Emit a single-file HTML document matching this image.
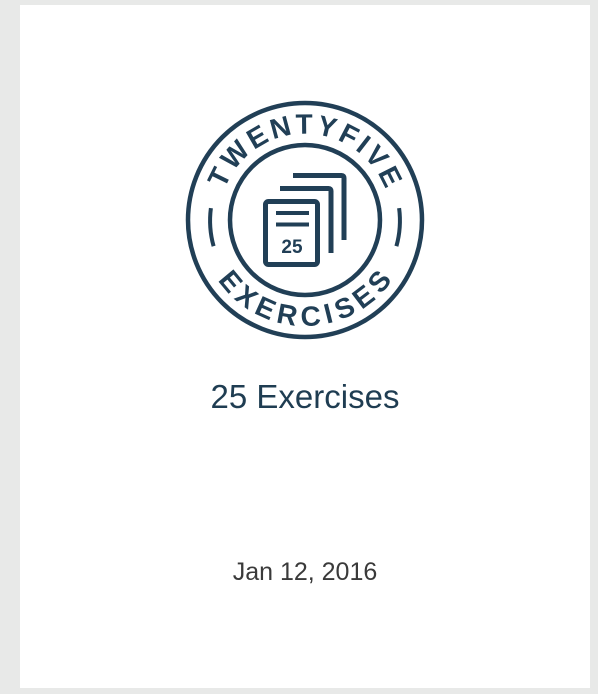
<!DOCTYPE html>
<html><head><style>
html,body{margin:0;padding:0;}
body{width:598px;height:694px;background:#e8e9e8;position:relative;overflow:hidden;font-family:"Liberation Sans",sans-serif;}
.card{position:absolute;left:20px;top:5px;width:570px;height:683px;background:#fff;}
.t{position:absolute;left:20px;width:570px;text-align:center;}
</style></head><body>
<div class="card"></div>
<svg width="598" height="694" style="position:absolute;left:0;top:0">
<g fill="none" stroke="#213f56">
<circle cx="305" cy="220" r="117" stroke-width="4.5"/>
<circle cx="305" cy="220" r="75" stroke-width="4.5"/>
<path d="M210.9 208.1 A95 95 0 0 0 213.6 246.2" stroke-width="4"/>
<path d="M399.1 208.1 A95 95 0 0 1 396.4 246.2" stroke-width="4"/>
<rect x="265.5" y="201.5" width="52" height="63" rx="3" stroke-width="5"/>
<path d="M280 188.5 H328.5 Q331 188.5 331 191 V253" stroke-width="5"/>
<path d="M293 175.5 H341.5 Q344 175.5 344 178 V240" stroke-width="5"/>
<path d="M276 213 H309 M276 224.5 H309" stroke-width="4"/>
</g>
<text x="292" y="253" text-anchor="middle" font-family="Liberation Sans" font-weight="bold" font-size="19" fill="#213f56">25</text>
<defs>
<path id="top" d="M224.6 189.2 A86 86 0 0 1 385.4 189.2"/>
<path id="bot" d="M218.2 280.8 A106 106 0 0 0 391.8 280.8"/>
</defs>
<text font-family="Liberation Sans" font-weight="bold" font-size="28" fill="#213f56"><textPath href="#top" startOffset="50%" text-anchor="middle" textLength="208" lengthAdjust="spacing">TWENTYFIVE</textPath></text>
<text font-family="Liberation Sans" font-weight="bold" font-size="28" fill="#213f56"><textPath href="#bot" startOffset="50%" text-anchor="middle" textLength="205" lengthAdjust="spacing">EXERCISES</textPath></text>
</svg>
<div class="t" style="top:378px;font-size:33px;color:#1f3d52;">25 Exercises</div>
<div class="t" style="top:558px;font-size:25px;color:#3a3a3a;">Jan 12, 2016</div>
</body></html>
